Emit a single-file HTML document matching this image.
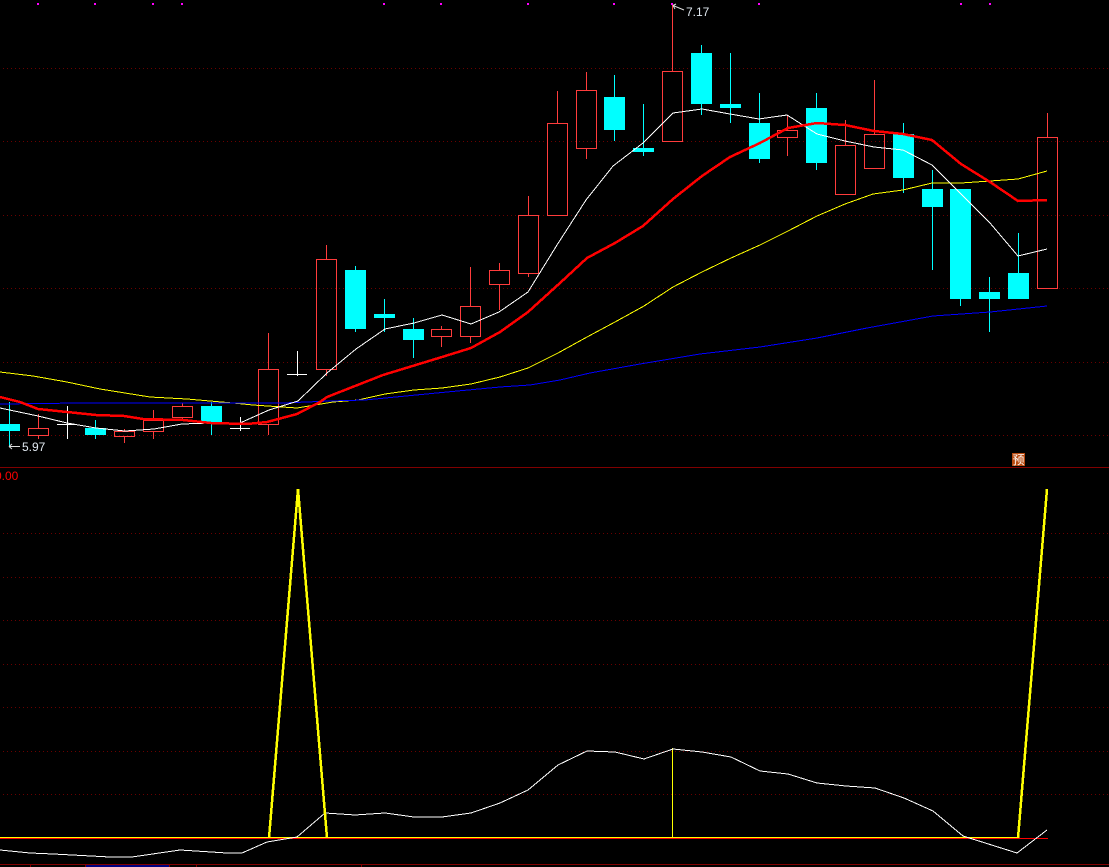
<!DOCTYPE html>
<html><head><meta charset="utf-8"><style>
html,body{margin:0;padding:0;background:#000;width:1109px;height:867px;overflow:hidden}
svg{display:block}
text{font-family:"Liberation Sans","WenQuanYi Zen Hei",sans-serif;font-size:12px}
</style></head><body>
<svg width="1109" height="867" viewBox="0 0 1109 867" xmlns="http://www.w3.org/2000/svg">
<rect width="1109" height="867" fill="#000"/>
<g shape-rendering="crispEdges">
<g fill="none" stroke="#6a0000" stroke-width="1" stroke-dasharray="1 3">
<path d="M3 68.5H1109M3 141.5H1109M3 215.5H1109M3 288.5H1109M3 362.5H1109M3 435.5H1109"/>
<path d="M3 533.5H1109M3 577.5H1109M3 620.5H1109M3 664.5H1109M3 707.5H1109M3 751.5H1109M3 794.5H1109"/>
</g>
<path d="M0 467.5H1109M0 864.5H1109" stroke="#800000" fill="none"/>
<rect x="85" y="865" width="84" height="2" fill="#000080"/>
<path d="M30.5 865V867M85.5 865V867M169.5 865V867M196.5 865V867M361.5 865V867" stroke="#800000"/>
<g fill="#ff00ff">
<rect x="37" y="3" width="2" height="2"/><rect x="94" y="3" width="2" height="2"/><rect x="152" y="3" width="2" height="2"/><rect x="181" y="3" width="2" height="2"/><rect x="383" y="3" width="2" height="2"/><rect x="440" y="3" width="2" height="2"/><rect x="527" y="3" width="2" height="2"/><rect x="613" y="3" width="2" height="2"/><rect x="671" y="3" width="2" height="2"/><rect x="758" y="3" width="2" height="2"/><rect x="960" y="3" width="2" height="2"/><rect x="989" y="3" width="2" height="2"/>
</g>
<!-- cyan wicks -->
<path fill="none" stroke="#00ffff" d="M9.5 402V447M95.5 420V439M211.5 402V435M355.5 266V332M384.5 299V332M413.5 318V358M614.5 75V141M643.5 104V156M701.5 45V115M730.5 53V123M759.5 93V163M816.5 93V170M903.5 123V193M932.5 170V270M960.5 189V306M989.5 277V332M1018.5 233V273"/>
<!-- cyan bodies -->
<g fill="#00ffff">
<rect x="-1" y="424" width="21" height="7"/><rect x="85" y="428" width="21" height="7"/><rect x="201" y="406" width="21" height="17"/><rect x="345" y="270" width="21" height="59"/><rect x="374" y="314" width="21" height="4"/><rect x="403" y="329" width="21" height="11"/><rect x="604" y="97" width="21" height="33"/><rect x="633" y="148" width="21" height="4"/><rect x="691" y="53" width="21" height="51"/><rect x="720" y="104" width="21" height="4"/><rect x="749" y="123" width="21" height="36"/><rect x="806" y="108" width="21" height="55"/><rect x="893" y="134" width="21" height="44"/><rect x="922" y="189" width="21" height="18"/><rect x="950" y="189" width="21" height="110"/><rect x="979" y="292" width="21" height="7"/><rect x="1008" y="273" width="21" height="26"/>
</g>
<!-- white dojis -->
<path fill="none" stroke="#ffffff" d="M67.5 406V439M57 424.5H77M240.5 417V431M230 428.5H250M297.5 351V376M287 374.5H307"/>
<!-- red candles -->
<g fill="none" stroke="#ff3c3c">
<path d="M38.5 414V428M38.5 436V439M124.5 429V431M124.5 436V443M153.5 410V420M153.5 432V439M182.5 403V406M182.5 418V420M268.5 333V369M268.5 425V435M326.5 245V259M326.5 370V376M441.5 326V329M441.5 337V347M470.5 267V306M470.5 337V343M499.5 263V270M499.5 284V310M528.5 196V215M528.5 273V277M557.5 91V123M586.5 72V90M586.5 148V159M672.5 5V71M787.5 115V130M787.5 137V156M845.5 120V145M874.5 80V134M1047.5 113V137"/>
<rect x="28.5" y="428.5" width="20" height="7"/><rect x="114.5" y="431.5" width="20" height="5"/><rect x="143.5" y="420.5" width="20" height="11"/><rect x="172.5" y="406.5" width="20" height="11"/><rect x="258.5" y="369.5" width="20" height="55"/><rect x="316.5" y="259.5" width="20" height="110"/><rect x="431.5" y="329.5" width="20" height="7"/><rect x="460.5" y="306.5" width="20" height="30"/><rect x="489.5" y="270.5" width="20" height="14"/><rect x="518.5" y="215.5" width="20" height="58"/><rect x="547.5" y="123.5" width="20" height="92"/><rect x="576.5" y="90.5" width="20" height="58"/><rect x="662.5" y="71.5" width="20" height="70"/><rect x="777.5" y="130.5" width="20" height="7"/><rect x="835.5" y="145.5" width="20" height="49"/><rect x="864.5" y="134.5" width="20" height="34"/><rect x="1037.5" y="137.5" width="20" height="151"/>
</g>
<!-- MA20 yellow -->
<polyline fill="none" stroke="#ffff00" points="0,372 33,376 67,382 100,389 150,397 187,399 233,403 253,405 297,408 333,402 358,400 385,394 414,390 442,388 471,384 500,377 528,368 558,353 587,337 615,322 644,306 673,287 702,272 731,258 760,245 788,231 817,216 845,204 873,194 903,190 932,183 961,183 990,181 1018,179 1047,171"/>
<!-- MA60 blue -->
<polyline fill="none" stroke="#0000ff" points="0,404 80,403 240,403 283,403 330,401 365,400 447,392 500,387 530,385 560,380 590,373 640,364 700,354 760,347 817,338 867,328 900,322 933,316 990,312 1047,306"/>
<!-- MA5 white -->
<polyline fill="none" stroke="#ffffff" points="0,408 38,416 67,423 96,428 125,431 154,429 182,424 211,423 240,423 269,410 298,401 327,373 356,349 385,329 414,323 442,315 471,324 499,312 528,292 557,245 586,200 613,166 643,143 673,113 702,109 730,114 759,119 787,115 817,134 845,141 874,147 903,150 932,165 961,194 990,223 1018,256 1047,249"/>
<!-- MA10 red -->
<polyline fill="none" stroke="#ff0000" stroke-width="2.5" points="0,397 20,402 38,409 67,412 96,415 124,416 143,419 183,420 211,423 247,424 267,422 297,414 320,402 327,397 383,375 442,357 471,348 500,332 528,312 560,283 587,258 615,243 643,226 673,199 702,176 730,157 760,143 788,128 817,123 845,125 874,131 903,134 932,140 961,164 990,182 1018,201 1047,200"/>
</g>
<!-- labels -->
<path d="M9 446.5H20M9 446.5L12 444M9 446.5L12 449" stroke="#ddd" fill="none"/>
<text x="22" y="451" fill="#e0e8f0">5.97</text>
<path d="M673 5.5L684 10M673 5.5L676 4M673 5.5L675 9" stroke="#ddd" fill="none"/>
<text x="686" y="16" fill="#e0e8f0">7.17</text>
<text x="-5" y="480" fill="#ff0000">0.00</text>
<rect x="1012" y="453" width="13" height="13" fill="#b84a10"/>
<text x="1012.5" y="464" fill="#ffffff" style="font-size:12px">预</text>
<!-- lower panel -->
<g shape-rendering="crispEdges" fill="none">
<path d="M672.5 748V838" stroke="#ffff00"/>
<path d="M0 837.5H1018" stroke="#ffff00"/>
<path d="M0 838.5H1048" stroke="#ff0000"/>
<polyline stroke="#ffffff" points="0,850 30,853 53,854 110,857 132,857 180,850 227,853 242,853 267,842 297,837 325,813 355,815 385,813 414,817 442,817 471,813 500,803 528,790 558,765 587,751 615,752 644,759 673,749 702,752 731,757 760,771 788,774 817,783 846,786 875,788 904,798 933,811 963,836 1017,853 1047,830"/>
<polyline stroke="#ffff00" stroke-width="2.5" points="269,838 298,489 327,838"/>
<polyline stroke="#ffff00" stroke-width="2.5" points="1018,838 1047,489"/>
</g>
</svg>
</body></html>
